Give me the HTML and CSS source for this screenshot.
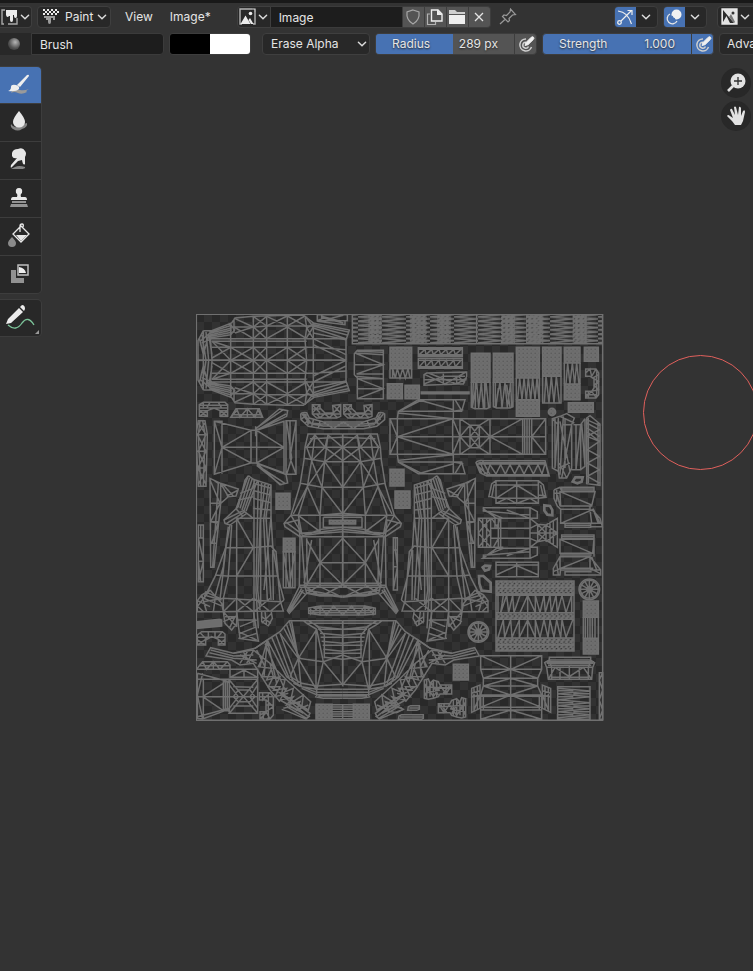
FILE: index.html
```
<!DOCTYPE html>
<html lang="en">
<head>
<meta charset="utf-8">
<title>Image Editor</title>
<link rel="stylesheet" href="styles.css">
</head>
<body>
<svg class="defs" aria-hidden="true">
  <symbol id="chevron" viewBox="0 0 10 10"><path d="M2 3.5 5 6.5 8 3.5" fill="none" stroke="#dcdcdc" stroke-width="1.2" stroke-linecap="round"/></symbol>
  <symbol id="picture" viewBox="0 0 18 18"><path d="M13 1H1V16H3M16 4V16H14" fill="none" stroke="#b4b4b4" stroke-width="1.4"/><path d="M13 1H16V4" fill="none" stroke="#e0e0e0" stroke-width="1.2"/><path d="M1.500 16 6.500 7.500 11.500 16ZM9.500 12 11 10 14.500 16H12Z" fill="#ececec"/><circle cx="11.500" cy="5.500" r="1.800" fill="#ececec"/></symbol>
  <symbol id="pressure" viewBox="0 0 18 18"><path d="M9 4A6 6 0 1 0 14.500 12M9 7.200A3 3 0 1 0 11.500 11.500" fill="none" stroke="#cfcfcf" stroke-width="1.500"/><path d="M8 10.500 9 7.500 14.300 2.200Q15.500 1.200 16.500 2.200T16.300 4.500L11 9.700Z" fill="#f0f0f0" stroke="#f0f0f0"/></symbol>
</svg>

<header class="header">
  <div class="row">
    <button class="box editor" aria-label="Editor type">
      <svg width="18" height="18" viewBox="0 0 18 18"><path d="M4 2H1V16H3M16 10V16H7" fill="none" stroke="#a8a8a8" stroke-width="1.400"/><path d="M5 2H16V8Q16 10 14.500 10T13 8V7H12V12Q12 14 10.500 14T9 12V8H8Q7.500 9 6.500 9T5 7Z" fill="#ececec"/></svg>
      <svg class="chev"><use href="#chevron"/></svg>
    </button>
    <div class="box mode">
      <svg width="18" height="18" viewBox="0 0 18 18"><path d="M1 1H3V3H1ZM5 1H7V3H5ZM9 1H11V3H9ZM13 1H15V3H13ZM3 3H5V5H3ZM7 3H9V5H7ZM11 3H13V5H11ZM15 3H17V5H15ZM1 5H3V7H1ZM5 5H7V7H5ZM9 5H11V7H9ZM13 5H15V7H13Z" fill="#ececec"/><path d="M2 8H13V12H11V10H9V14Q9 16 7.500 16T6 14V12H4V10H2Z" fill="#9b9b9b"/></svg>
      <select aria-label="Mode"><option>Paint</option><option>View</option><option>Mask</option></select>
      <svg class="chev"><use href="#chevron"/></svg>
    </div>
    <nav class="menus"><button>View</button><button>Image*</button></nav>
    <div class="datablock">
      <button class="box pick" aria-label="Browse image"><svg width="18" height="18"><use href="#picture"/></svg><svg class="chev"><use href="#chevron"/></svg></button>
      <input class="name" value="Image" aria-label="Image name">
      <button class="tile" aria-label="Fake user"><svg width="16" height="18" viewBox="0 0 16 18"><path d="M8 2 14 4Q15 12 8 16Q1 12 2 4Z" fill="none" stroke="#a6a6a6" stroke-width="1.200"/></svg></button>
      <button class="tile" aria-label="New image"><svg width="18" height="18" viewBox="0 0 18 18"><path d="M4 6H1.500V16.500H9.500V14" fill="none" stroke="#b2b2b2" stroke-width="1.200"/><path d="M5.500 2H12L16 6V13H5.500Z" fill="none" stroke="#eee" stroke-width="1.400"/><path d="M11 1.500 16.500 7H11Z" fill="#eee"/></svg></button>
      <button class="tile" aria-label="Open image"><svg width="18" height="18" viewBox="0 0 18 18"><path d="M1 2H7L9 4H17V6H1Z" fill="#cfcfcf"/><path d="M1 7H17V16H1Z" fill="#eee"/></svg></button>
      <button class="tile last" aria-label="Unlink"><svg width="18" height="18" viewBox="0 0 18 18"><path d="M5 5 13 13M13 5 5 13" stroke="#e4e4e4" stroke-width="1.300"/></svg></button>
    </div>
    <button class="pin" aria-label="Pin"><svg width="18" height="18" viewBox="0 0 18 18"><path d="M1 16 6.500 11M3.500 8.500 9 14 10.500 12.500 10 10.500 13.500 7 16.500 6.500 11.500 1 11 4 7.500 7.500 5 7Z" fill="none" stroke="#989898" stroke-width="1.200"/></svg></button>
    <div class="toggle gizmo">
      <button class="on" aria-label="Gizmos"><svg width="18" height="18" viewBox="0 0 18 18"><path d="M2 3Q12 4 15.500 16M5 13 15 3M11.500 2.500H16V7" fill="none" stroke="#eee" stroke-width="1.200"/><circle cx="3.500" cy="14.500" r="1.800" fill="none" stroke="#eee" stroke-width="1.300"/></svg></button>
      <button aria-label="Gizmo options"><svg class="chev"><use href="#chevron"/></svg></button>
    </div>
    <div class="toggle">
      <button class="on" aria-label="Overlays"><svg width="18" height="18" viewBox="0 0 18 18"><circle cx="11.500" cy="6.500" r="5" fill="#f1f1f1"/><path d="M5 6A5.200 5.200 0 1 0 12 13" fill="none" stroke="#e6e6e6" stroke-width="1.300"/><path d="M7 8A4 4 0 0 0 10 11" fill="none" stroke="#4772b3" stroke-width="1.300"/></svg></button>
      <button aria-label="Overlay options"><svg class="chev"><use href="#chevron"/></svg></button>
    </div>
    <button class="box channels" aria-label="Display channels"><svg width="18" height="18" viewBox="0 0 18 18"><path d="M1 1H16V16H1Z" fill="#e2e2e2" stroke="#e6e6e6" stroke-width="1.300"/><path d="M2 2 13 15H9L5.500 8 2 14Z" fill="#2b2b2b"/><path d="M8 9 10 6 14 14 13 15Z" fill="#777"/><circle cx="12" cy="5" r="1.500" fill="#333"/></svg><svg class="chev"><use href="#chevron"/></svg></button>
  </div>
  <div class="row second">
    <button class="brushpick" aria-label="Browse brush"><i></i></button>
    <input class="name brush" value="Brush" aria-label="Brush name">
    <div class="colors"><input type="color" value="#000000" aria-label="Primary color"><input type="color" value="#ffffff" aria-label="Secondary color"></div>
    <div class="box blend"><select aria-label="Blend mode"><option>Erase Alpha</option><option>Mix</option></select><svg class="chev"><use href="#chevron"/></svg></div>
    <div class="field">
      <label class="slider radius"><input type="range" min="0" max="512" value="289"><span>Radius</span><output>289 px</output></label>
      <button aria-label="Radius pressure"><svg width="18" height="18"><use href="#pressure"/></svg></button>
    </div>
    <div class="field active">
      <label class="slider strength"><input type="range" min="0" max="1" step="0.001" value="1"><span>Strength</span><output>1.000</output></label>
      <button aria-label="Strength pressure"><svg width="18" height="18"><use href="#pressure"/></svg></button>
    </div>
    <button class="box advanced">Advanced</button>
  </div>
</header>

<main class="canvas">
  <aside class="tools">
    <div class="group">
      <button class="on" aria-label="Draw"><svg viewBox="0 0 24 24"><path d="M5 18Q9 16 13 17T22 16Q18 18 20 19Q15 22 11 20T4 20Z" fill="#9a9a9a"/><path d="M10 12 20 2Q22 1 22 3L13 14ZM9 12Q13 13 12 16Q9 19 1 18Q4 17 4 14T9 12Z" fill="#eee"/></svg></button>
      <button aria-label="Soften"><svg viewBox="0 0 24 24"><path d="M4 15Q8 21 13 16L20 14Q21 18 15 20Q11 23 6 20Q3 18 4 15Z" fill="#858585"/><path d="M12 2Q18 9 18 13A6 5.500 0 0 1 6 13Q6 9 12 2Z" fill="#e8e8e8"/></svg></button>
      <button aria-label="Smear"><svg viewBox="0 0 24 24"><path d="M8 20Q12 18 18 20Q19 22 13 22H4Z" fill="#858585"/><path d="M5 6Q6 2 11 2Q16 0 18 4Q20 6 18 10V17Q16 19 15 13L11 14 5 20Q3 22 4 18L10 11Q6 12 5 9Z" fill="#e8e8e8"/></svg></button>
      <button aria-label="Clone"><svg viewBox="0 0 24 24"><path d="M9 8Q8 3 12 3T15 8Q13 9 14 12H18Q20 12 20 15H4Q4 12 6 12H10Q11 9 9 8Z" fill="#e8e8e8"/><path d="M5 16H19V18H5ZM4 19H20L21 22H3Z" fill="#949494"/></svg></button>
      <button aria-label="Fill"><svg viewBox="0 0 24 24"><path d="M5 14Q9 18 9 20A4 4 0 0 1 1 20Q1 18 5 14Z" fill="#8b8b8b"/><path d="M14 3 22 11 14 19 6 11ZM13 3V9M13 3Q13 1 15 1T16 4" fill="none" stroke="#e8e8e8" stroke-width="1.300"/><path d="M9 12H20L14 18Z" fill="#e8e8e8"/></svg></button>
      <button aria-label="Mask"><svg viewBox="0 0 24 24"><path d="M4 9H9V17H17V22H4Z" fill="#929292"/><path d="M11 4H21V14H11Z" fill="none" stroke="#bebebe" stroke-width="1.500"/><path d="M12 6Q18 7 19 12H12Z" fill="#eee"/></svg></button>
    </div>
    <div class="group">
      <button class="annotate" aria-label="Annotate"><svg viewBox="0 0 30 30"><path d="M3 22Q11 29 17 20Q23 12 29 22" fill="none" stroke="#7cc49a" stroke-width="1.300"/><path d="M1 21 3 16 14 5 18 9 6 20ZM15 4 17 2Q20 2 20 6L19 8Z" fill="#ececec"/></svg></button>
    </div>
  </aside>

  <svg class="uv" viewBox="18 18 1224 1224" role="img" aria-label="UV layout">
    <defs>
      <pattern id="checker" width="48" height="48" patternUnits="userSpaceOnUse" x="18" y="18"><path d="M0 0H48V48H0Z" fill="#323232"/><path d="M0 0H24V24H0ZM24 24H48V48H24Z" fill="#292929"/></pattern>
      <pattern id="dense" width="12" height="12" patternUnits="userSpaceOnUse"><path d="M0 0H12V12H0Z" fill="#6e6e6e"/><path d="M2 2H5V5H2ZM8 8H10V10H8Z" fill="#4b4b4b"/></pattern>
      <pattern id="cross" width="14" height="14" patternUnits="userSpaceOnUse"><path d="M0 0H14V14H0ZM0 14 14 0"/></pattern>
      <pattern id="flat" width="72" height="13" patternUnits="userSpaceOnUse"><path d="M0 1 72 7 0 13"/></pattern>
      <g id="wheel"><circle r="31"/><circle r="27"/><circle r="8"/><path d="M-31 0H31M0-31V31M-27-15 27 15M-27 15 27-15M-15-27 15 27M-15 27 15-27"/></g>
      <g id="cabin">
        <path d="M40 68H65L125 45 135 30 190 25 292 22H340L372 46 478 66 468 96V157M40 68 24 98V157M40 68V157M48 72 56 157M60 70 66 157M36 80 48 157M28 90 40 140 56 80 66 140M122 45V157M132 32V75M190 25V157M230 25V157M292 22V157M345 24 350 60 345 95 350 157M370 46V157"/>
        <path d="M22 157H468M60 92H468M65 100H350M65 118H370M122 57H190L230 54H370M66 100 122 118M60 72 125 52M62 75 125 60M62 80 125 66M62 85 130 72M60 90 122 80M30 100 60 75M35 105 66 92M122 50 134 66 122 80"/>
        <path d="M66 100 122 157M66 150 122 118M122 157 190 118M122 118 190 157M190 157 230 118M190 118 230 157 292 118M292 118 350 157M350 118 292 157M370 110 468 157M370 118 468 125M370 92 468 140M370 60 468 92M370 75 468 95M372 50 475 72M370 54 474 82"/>
        <path d="M135 32 190 57 135 75M190 25 230 54 292 24M230 25 190 57 230 92M230 25 292 54 345 24M292 24 350 56M230 57 190 92M292 57 230 92M292 57 350 92M132 57 190 92M345 24 370 57 348 92M372 46 350 60 370 92"/>
      </g>
      <g id="lamp"><path d="M367 290H390V300L405 315H430L428 292 452 290V325L440 330H380L367 318ZM367 318H452M367 290 390 315M390 290 367 315M452 290 430 315M430 292 452 315M367 303H393M380 318 390 329 404 318 418 329 430 318 442 329"/></g>
      <g id="hood">
        <path d="M458-18H354L345 22 342 60 330 135 303 226 282 250 285 260 330 290H458M375-15 350 22H458M360-4 458-8M342 55 405 65H458M332 130 395 142H458M303 226H458M330 280 395 275 458 268M330 290 395 268 458 262M285 250 325 240 330 290M290 248 338 284M390 226 458 220M340 286 395 280 458 275"/>
        <path d="M375-15 365 62 352 140 325 226 335 280M414-15 404 65 396 142 390 226V280M458-18V436M350 22 375-15 405 22 414-15 458 22M365 62 350 22M365 62 405 22 458 62M405 65 458 22M352 140 404 65 458 142M396 142 365 62M396 142 458 222M325 226 352 140 390 226M325 226 390 275M303 226 335 280M310 222 352 140M400 232H458M400 232V262H458"/>
        <path d="M330 290 328 440M335 290 345 440M350 295 352 435M365 300 342 430M390 295V435M350 300 390 368 458 295M390 368 458 435M390 368 350 435M390 368H458M330 436H458M345 430H458"/>
        <path d="M330 436 292 512 298 520 350 460 390 468H458M335 445 295 514M340 450 298 516M350 450 458 470M330 442H458M350 458 458 472M340 435 390 468M390 435 350 460M458 435 395 468M390 440 458 472M345 440 350 460M330 452 345 462"/>
      </g>
      <g id="fender">
        <path d="M60 115 92 130 145 147 138 168 115 170 92 190 72 382H62ZM92 130V190H62M92 130 115 170M95 130 130 168M60 245H88M60 120 90 190 62 245 85 250 65 310H80M70 120 85 130 68 380M145 150 110 168M66 310 84 250"/>
        <path d="M175 107 190 118 243 135V230L248 315 262 405 282 480M175 107 165 120 145 200 102 240 105 250 120 255 108 320 75 410 42 475M180 110 150 205M187 115 156 210M195 120 162 212M202 122 168 214M175 107 138 206M192 118V560M205 122 198 450 205 565M215 125 203 450 210 510M225 130 212 235V490M235 135 221 240 232 480M243 135 228 230 243 480M243 230 222 450M243 318 258 335 270 480M248 330 250 480"/>
        <path d="M140 235H243M105 323H190L245 318M75 405 110 408H265M190 323 140 408M140 235 190 323M140 235V560M125 255 115 410 100 475M115 260 100 380 75 470M108 320 90 480M102 240 160 212 190 235M110 250 165 215M120 255 170 220M190 130 243 145M190 152 243 165M190 175 243 188M190 205 243 210M150 160 190 145M145 180 190 170M138 206 160 230"/>
        <path d="M60 450 35 465 22 482V515L100 515 95 490 60 450M40 485 100 475 270 485M100 515 280 513 270 480M22 482 60 500M42 465 95 480M35 465 50 515M30 470 100 500M45 455 90 475M60 450 22 500M100 475V515L140 560M140 475 100 515M140 515 190 475M190 515 140 475M192 475 240 515M192 515 240 475M240 515 282 480M100 515 105 550 125 570 140 550M105 530H140M100 545 135 530 118 565M140 540H195M145 595 205 603 190 515M140 515 150 595M150 560 200 540M145 575 200 600M150 580 200 560M155 595 200 580M215 515V545L235 557 247 535 243 510M215 530 243 550M215 550 245 520M225 515 230 555M25 500 40 515M75 480 70 515"/>
      </g>
      <g id="front">
        <path d="M458 122H298L270 155 232 180 195 205 130 220 62 203 48 228 125 240 150 255 190 250 240 330 270 365M340 122 350 130H458M350 130 380 148 400 245 380 330V348M385 145 403 165V235M370 130 395 150M355 122 385 140M298 122 325 235 270 160M305 125 325 235 380 148M325 235 380 330M325 235 400 245 458 225M400 245 458 315 458 122M400 245 380 330M325 235 333 318M325 235 300 290M378 150V330"/>
        <path d="M385 148H458M390 160 458 166M392 172H458M395 184 458 190M398 196H458M400 208 458 214M402 220H458M403 232 458 238M380 140 458 148M300 290 335 310 380 318 458 313M305 300 335 320 380 328H458M310 310 380 337H458M335 325 380 344H458M375 350 400 355H458M385 348 458 348"/>
        <path d="M232 180 290 290 330 320M245 172 300 300M258 165 310 305M270 160 325 310M282 145 330 235M290 135 325 230M232 180 222 290M232 180 260 310M225 190 285 330M195 205 232 180 210 260M130 220 190 210 240 250 290 300 362 365 355 390 240 320M62 210 130 228 190 225M58 218 130 235 200 240M150 225 200 250M160 215 180 250M175 210 150 250M190 212 170 250M200 210 225 260 215 290 250 290 235 320 270 320 255 350 295 340M220 230 205 260 245 265 230 300 270 290 250 330 290 325 270 360 310 350 290 375 330 365 320 390 355 375M240 250 250 290 285 300 275 340 310 325 300 370 340 345 335 385M270 340 355 410 360 400 290 350M270 360 340 400M290 380 350 415 360 408M280 385 300 380 330 395M275 388 295 395 350 418"/>
      </g>
      <g id="pillar"><path d="M25 310 85 275H225L215 310H190V332L25 315ZM85 275 190 305M35 306 95 276M190 275V310L220 305M195 275 215 308M25 310H210M25 310 22 332"/></g>
      <g id="blob"><path d="M103 300 115 297 120 310 130 300 145 305 150 315H185V342H150L145 350 130 355 115 358 103 355ZM103 320 185 325M103 340 150 330M110 300V355M120 310V350M130 300V355M140 305V350M103 310 130 350 150 320M103 350 125 310 145 345M150 315 168 342 185 315M168 315V342M178 318 160 340"/></g>
    </defs>
    <path d="M18 18H1240V1239H18Z" fill="url(#checker)"/>
    <g class="wire">
      <path d="M19 19H1238V1237H19Z"/>
      <!-- cabin, top strip -->
      <use href="#cabin"/><use href="#cabin" transform="translate(0 314) scale(1 -1)"/>
      <path d="M382 20H472V38H382ZM395 22V38L460 22M395 25 445 38M382 40 465 50V38M382 38 400 30 460 45"/>
      <g stroke="none"><path d="M487 20H1238V107H487Z" fill="url(#flat)"/>
      <path d="M535 20H575V107H535ZM660 20H710V107H660ZM742 20H782V107H742ZM933 20H975V107H933ZM1008 20H1060V107H1008ZM1148 20H1188V107H1148Z" fill="url(#cross)"/></g>
      <path d="M487 20V107H1238M860 20V107M1188 20V107"/>
      <path d="M502 127H580V272H502V210L493 200V137ZM495 135 580 140M495 135 580 170 500 198H580M495 205 580 212M502 212 580 242 502 272M502 212H580M502 242H580M495 170H580M502 130 580 133"/>
      <path d="M28 325V290L40 283H105L113 290V325H90V308L72 300 52 308V325ZM28 300H113M28 325 52 308M113 325 90 308M28 308 52 325M90 325 113 308M30 292H113M40 283V300M60 283 50 300M85 283 95 300M28 308H52M90 308H113"/>
      <path d="M122 328 138 302H208L218 328ZM140 302 150 328 172 302 195 328 205 302M172 302V328M128 320H212M125 325 140 308M215 325 205 308"/>
      <path d="M73 340 183 367V465L73 499ZM73 340H96V497M183 367H200V465H183M200 367 282 340V495L200 465M73 340 96 418 73 499M96 418H282M96 418 183 367M96 418 183 465M282 418 200 367M282 418 200 465M288 338H318V499H288ZM300 338V450M290 340 305 450 290 499M318 340 300 450 318 499M200 360 268 303 293 308 290 325 200 367ZM200 360 280 305M203 365 288 318M200 466 270 530 293 525 288 500ZM200 472 275 532M205 474 285 526M197 355V385"/>
      <path d="M25 338H45L52 380 48 535H25L18 380ZM30 338 25 380 32 535M38 338 45 380 40 535M18 380H52M20 430H50M22 480H49M25 345 48 380 25 430 48 480 25 530M45 345 22 380 48 430 24 480 48 530"/>
      <path d="M25 651H40V821H25ZM25 690H40M25 760H40M32 651V690M25 690 40 760 25 821M25 760 32 821"/>
      <use href="#lamp"/><use href="#lamp" transform="translate(94 0)"/>
      <path d="M332 318Q335 312 350 314L358 330 400 342H520L558 330 566 314Q580 312 584 318V335L560 355 520 362H400L355 355 333 335ZM336 318 358 345 400 348H520L558 345 580 318M340 316 365 348 400 354H520L552 350 572 316M333 335 350 320M345 347 358 330M365 356 370 336M385 360 390 340M532 340 540 358M554 332 565 348M345 318 355 350M572 335 560 320M400 342 430 362 460 342 490 362 520 342"/>
      <!-- hood, roof, fenders, front -->
      <g transform="translate(0 396)">
        <use href="#hood"/><use href="#hood" transform="translate(916) scale(-1 1)"/>
        <use href="#fender"/><use href="#fender" transform="translate(916) scale(-1 1)"/>
        <path class="fill" d="M258 160H300V208H258ZM600 88H642V138H600ZM615 153H660V205H615ZM280 295H315V335H280ZM418 241H497V252H418Z"/>
        <path d="M280 335H315V443H280ZM288 335V443M297 335 302 443M308 335V443M280 335 297 443 315 335M610 293H622V450H610ZM616 293V330L622 380 610 450M610 330H622M610 380H622"/>
      </g>
      <g transform="translate(0 816)">
        <use href="#front"/><use href="#front" transform="translate(916) scale(-1 1)"/>
        <path d="M356 84 390 78H525L556 84V102L525 105H390L356 100ZM356 92H556M362 82V102L390 78 410 105 430 78 458 105 485 78 505 105 525 78 550 102V82M390 78V105M525 78V105M370 85H545M370 98H545"/>
        <path class="fill" d="M378 373H426V417H378ZM490 373H538V417H490Z"/><path d="M426 374H490M426 381H490M426 388H490M426 395H490M426 402H490M426 409H490M426 416H490M458 374V416"/>
        <path class="solid" d="M20 125 88 118 95 120V138L20 145Z"/>
        <path d="M22 195V165L35 155H97L105 162V195H85V178L65 170 47 180V195ZM22 172H105M22 180 47 195M22 195 47 178M85 195 105 178M85 178 105 195M30 158 50 178M97 155 80 175M55 155V172M75 155V172M22 265 38 245H112L120 255V268H22ZM30 257H118M38 245 50 268 70 245 90 268 112 245M70 245V268M120 268H203V292H120ZM162 268V292M120 292 162 270 203 292"/>
        <path d="M22 280 118 305M22 298H203M22 410 118 385M38 280 22 345 38 417M22 280V415M40 300V415M38 350 100 310M38 350 100 392M22 350H203M100 305H112V392H100ZM106 305V392M203 298 118 400H203V292M118 300 203 400M118 298V400M130 350 145 330H180L195 350 180 365H145ZM118 315 145 350 118 385M203 315 180 350 203 385M112 310 120 298M112 385 120 400M130 320 190 322M130 378H190M20 415 38 417 105 392"/>
        <path d="M208 338H240L250 350V405L240 417H210V395H228V360H208ZM218 338V360L240 338M208 350H250M228 360 250 380 228 395M235 340V415M210 405 228 395 240 417M220 395V417M210 417 230 397M228 375H250"/>
      </g>
      <!-- upper right islands -->
      <g transform="translate(600 0)">
        <path class="fill" d="M0 118H65V182H0ZM-8 227H37V272H-8ZM45 232H88V272H45ZM244 136H300V223H244ZM310 136H369V223H310ZM379 118H448V210H379ZM379 275H448V325H379ZM458 118H513V205H458ZM523 118H570V165H523ZM523 228H570V275H523ZM583 118H625V160H583ZM535 284H610V313H535Z"/>
        <circle class="fill" cx="486" cy="312" r="11"/>
        <path d="M0 182V210H65V182M8 210V182L16 210 22 182 30 210 38 182 46 210 54 182 60 210M85 119H217V145H85ZM85 151H217V181H85ZM85 124H217M85 140H217M85 157H217M85 176H217M88 140 105 124 108 140 125 124 130 140 147 124 152 140 169 124 174 140 191 124 196 140 213 124M88 176 105 157 108 176 125 157 130 176 147 157 152 176 169 157 174 176 191 157 196 176 213 157"/>
        <path d="M102 200 110 195 230 192V205L220 228H205L102 232ZM102 215H230M105 200 165 228 205 205 225 225M160 195V230M115 195 200 228M205 205 228 192M102 228 160 205H225M200 210V228L230 210"/><path class="solid" d="M94 252H237V257H94Z"/>
        <path d="M244 223V298L255 302H290L300 298V223M250 223 247 298 260 223 266 300 274 223 280 300 288 223 296 298M256 223V300M284 223V300M310 223V296L320 300H360L369 296V223M316 223V298L330 223 336 298 345 223 352 298 362 223 365 298M325 240 318 298M350 230 360 298M379 210V275M448 210V275M383 275 389 210 396 275 402 210 409 275 415 210 422 275 428 210 435 275 441 210 447 275M458 205V285H513V205M463 285 468 205 477 285 484 205 492 285 499 205 508 285M523 165V228M570 165V228M528 228 533 165 540 228 547 165 554 228 560 165 567 228"/>
        <path d="M587 183H618L626 195V260L618 270H587V250H605L612 240V212L600 205H587ZM587 195 600 183 605 205 618 183M626 200 608 210 626 220 612 232 626 245 605 250 618 268M587 268 605 250M620 190V265M595 250V270M587 260H620"/>
        <use href="#pillar"/><use href="#pillar" transform="translate(0 772) scale(1 -1)"/>
        <path d="M0 332H467V439H0ZM22 332V439M188 332V439M210 332V439M300 332V439M398 332V439M404 332V439M411 332V439M418 332V439M425 332V439M22 386H467M188 332 22 386 188 439M0 332 22 386 0 439M210 332 240 352H268L300 332M210 439 240 419H268L300 439M240 352V419M268 352V419M188 332 210 386 240 352M240 419 210 386 188 439M268 352 300 386 268 419M398 332 300 386 398 439M467 332 425 386 467 439M240 352 268 386 240 419M268 352 240 386 268 419"/>
        <path d="M487 332 510 325 530 317 553 330 545 350V480L530 510H508L505 490 487 480ZM505 330V490M520 325 510 500M545 350 515 510M550 350H572V485H545M585 332V475L572 485M572 350 585 332M558 350V485L572 350M575 345 585 475M487 332 505 350M510 325 553 345M495 332V480L505 330M525 330V480M510 340 540 490M505 480 540 465M508 465 530 510M520 350H545"/>
        <path d="M590 330 600 323 630 348V532L590 527ZM595 330V525M624 345V530M590 345 628 365 592 385 628 400 592 425 628 445 592 465 628 485 592 505 628 525M590 335 628 352M592 360 628 385M592 372 628 400"/>
      </g>
      <!-- middle right islands -->
      <g transform="translate(600 396)">
        <path d="M258 68Q262 60 280 62H465L478 108H290L270 98ZM262 72H468M265 68H468M264 78 292 104H475M270 66 285 102M278 64 300 104M260 70 275 98M290 104 300 74 318 102 332 74 346 102 360 74 374 102 388 74 402 102 416 74 430 102 444 74 456 102 466 68 475 104"/>
        <path d="M318 122H445V190H318ZM296 172 305 132 318 122M305 172 312 135H318M296 168 318 175M318 135H445M318 175H445M380 122V190M318 175 380 135 445 175M318 190 350 175 380 190 420 175 445 190M445 122 460 135 468 172 445 175M452 135 460 170M445 165 468 168"/>
        <path d="M278 203H420V355H278L320 325H420M278 205 320 235H420M278 210 340 235M278 350 340 325M300 265H420M300 295H420M265 235H302V322H265ZM278 235V322M290 235V322M265 235 302 279 265 322M302 235 265 279 302 322M302 235H340M302 322H340M305 235 325 265M325 235V322M315 235V265M330 235 320 265M310 322 325 295M332 235V322M278 213 420 225M278 346 420 335M420 203 442 215V235H420M420 235 350 210M420 325 350 347M420 355 442 345V322H420M420 235 443 253 468 255 502 235V322L468 300 443 305 420 322M443 253V305M468 255V305M420 265 443 253 468 279 443 305 420 295M468 255 502 279 468 305M480 245V312M490 240V318M420 279H502M468 255 443 279 468 300"/>
        <path d="M318 367H445V410H318ZM380 367V410M318 375H445M318 405 380 377 445 405"/>
        <path class="ring" d="M463 196 480 198 487 210V226L472 224 463 212ZM548 125 556 112 578 112 575 125 562 130ZM278 382 285 377 300 378 297 388 285 392ZM267 408 280 408 302 428V455L275 452 268 430Z"/>
        <path d="M515 142H612V153H515ZM492 150 510 142 515 153M510 155H615L605 198H512ZM510 155 605 195M502 165 510 198M492 150V175L502 198 512 208H600V198M512 208V250H630L610 208 512 250M600 208 605 250M525 250V262H602V250M605 208 630 235 637 260H602M610 210 625 250M492 160H510M525 256H600M500 150V185M515 147H612"/>
        <path d="M515 285H612V296H515ZM510 298H612L608 340H510ZM510 298 608 340M510 345H605M600 350H510L490 385V405H510L512 385 600 350 632 390V405H525V395H605M600 350V385L630 400M510 350V385M500 370 505 405M490 395 512 385H610M512 390H630M605 350 620 390M515 290H612M612 298V350"/>
      </g>
      <!-- lower right islands -->
      <g transform="translate(600 816)">
        <use href="#wheel" transform="translate(265 156)"/><use href="#wheel" transform="translate(598 28)"/>
        <path stroke="none" fill="url(#cross)" d="M318 3H552V42H318ZM318 100H552V118H318ZM318 175H552V213H318Z"/>
        <path d="M318 3H552V213H318ZM318 22H552M318 42H552M318 46H552M318 98H552M318 118H552M318 174H552M318 194H552M413 46V172M324 46V98M340 46 332 98 350 46 356 98 368 46 372 98 390 46M390 98 413 46 436 98 436 46 450 98 462 46 466 98 480 46 484 98 498 46 502 98 516 46 528 98 545 46V98M324 172 340 120 344 172 362 120 366 172 388 120V172L413 120 436 172V120L450 172 462 120 474 172 480 120 492 172 500 120 512 172 516 120 528 172 548 120"/>
        <path class="fill" d="M580 63H625V112H580ZM580 175H625V222H580ZM190 253H235V300H190Z"/><path d="M580 112V175M625 112V175M586 112V175M593 112V175M600 112V175M607 112V175M615 112V175"/>
        <use href="#blob"/><use href="#blob" transform="translate(330 56) scale(-1 1)"/>
        <path d="M272 227H455V250V268L443 295V318L455 345V418H272V345L280 318V295L272 268ZM362 227V418M272 268H455M280 295H443M280 318H443M272 345H455M272 349H455M272 382H455M272 390H455M272 227 362 268 455 227M280 295 362 268 443 295M362 295 280 318M362 295 443 318M280 318 362 345 443 318M272 382 362 345 455 382M272 418 362 390 455 418M280 349V390M448 349V390"/>
        <path d="M245 325 270 315V385L245 397ZM245 340 270 332M252 325V392M262 320V388M245 350 270 345 252 390M482 325 457 315V385L482 397ZM482 340 457 332M475 325V392M465 320V388M482 350 457 345 475 390"/>
        <path d="M478 232H602V240L614 248 608 262 605 298H475L470 262 464 248 478 240ZM466 245H612M470 250H610M474 256H604M472 262H606M478 240H602M485 262V298M595 262V298M538 256V298M475 298 495 262 538 290 580 262 605 298M485 292H598M485 262 478 240M595 262 602 240M510 262V298M568 262V298"/>
        <path d="M503 320H600V418H503ZM503 325 600 333 503 341 600 350 503 359 600 368 503 377 600 386 503 395 600 404 503 413M503 332H550M503 350H550M550 341H600M503 368H550M550 378H600M503 386H550M550 395H600M503 404H550M520 418 600 410"/>
        <path d="M628 278H638V418H628ZM628 300 638 278M628 300 638 330 628 360 638 390 628 418M55 380 62 377H88V388L80 391H53ZM27 408 35 404H100V415L95 418H25ZM30 411H100M58 384H86M-10 380 15 375 40 388 20 398-5 394Z"/>
      </g>
    </g>
  </svg>
  <div class="cursor"></div>

  <div class="gizmos">
    <button aria-label="Zoom"><svg viewBox="0 0 30 30"><path d="M7 23 12 18" stroke="#e2e2e2" stroke-width="2.600"/><circle cx="17" cy="13" r="7.500" fill="#e2e2e2"/><path d="M17 9V17M13 13H21" stroke="#303030" stroke-width="1.300"/></svg></button>
    <button aria-label="Pan"><svg viewBox="0 0 30 30"><path d="M14 24 11 20 6 15Q7 13 9 15L12 17 9 9Q10 7 11 8L14 14 13 6Q14 5 15 6L17 14 18 6Q19 5 20 7L20 15 22 10Q24 8 24 11L22 20 20 24Z" fill="#e2e2e2"/></svg></button>
  </div>
</main>
</body>
</html>
```
FILE: styles.css
```
* { box-sizing: border-box; }
html, body { height: 100%; }
body {
  margin: 0;
  display: flex;
  flex-direction: column;
  overflow: hidden;
  background: #333333;
  color: #e5e5e5;
  font: 12px/20px Inter, "Liberation Sans", sans-serif;
}
button, input, select {
  margin: 0;
  padding: 0;
  border: 0;
  font: inherit;
  color: inherit;
  background: none;
  appearance: none;
}
button { display: flex; align-items: center; justify-content: center; flex: none; }
svg { display: block; flex: none; }
.defs { position: absolute; width: 0; height: 0; }
.chev { width: 12px; height: 12px; }

.header {
  flex: none;
  border-top: 3px solid #191919;
  padding-top: 3px;
  background: #333333;
  overflow: hidden;
}
.row { display: flex; align-items: center; height: 22px; white-space: nowrap; }
.second { margin-top: 5px; }

.box {
  display: flex;
  align-items: center;
  flex: none;
  height: 22px;
  border: 1px solid #3f3f3f;
  border-radius: 4px;
  background: #282828;
}
.editor { width: 32px; border-left: 0; border-radius: 0 4px 4px 0; margin-right: 5px; }
.mode { width: 74px; padding: 0 2px 0 4px; }
.mode select { flex: 1; min-width: 0; padding-left: 5px; }
.menus { display: flex; gap: 17px; padding: 0 26px 0 14px; }
.datablock { display: flex; flex: none; }
.pick { width: 34px; border-radius: 4px 0 0 4px; }
.name {
  width: 132px;
  height: 22px;
  padding: 0 8px;
  border: 1px solid #3b3b3b;
  border-left-width: 0;
  background: #1d1d1d;
}
.tile {
  width: 22px;
  height: 22px;
  border: 1px solid #3d3d3d;
  border-left-width: 0;
  background: #545454;
}
.last { border-radius: 0 4px 4px 0; }
.pin { margin-left: 8px; }
.toggle {
  display: flex;
  flex: none;
  height: 22px;
  margin-right: 5px;
  border: 1px solid #3d3d3d;
  border-radius: 4px;
  background: #282828;
  overflow: hidden;
}
.toggle button { width: 21px; height: 20px; }
.gizmo { margin-left: 97px; }
.toggle .on { background: #4772b3; }
.channels { width: 44px; margin-left: 5px; justify-content: flex-start; padding-left: 3px; }

.brushpick { width: 31px; height: 22px; background: #282828; }
.brushpick i {
  width: 12px;
  height: 12px;
  margin-right: 4px;
  border-radius: 50%;
  background: radial-gradient(circle at 60% 35%, #b5b5b5, #555 55%, #282828);
}
.brush { width: 133px; border-left-width: 1px; border-radius: 0 4px 4px 0; }
.colors {
  display: flex;
  flex: none;
  width: 82px;
  height: 22px;
  margin: 0 11px 0 5px;
  border: 1px solid #3d3d3d;
  border-radius: 4px;
  overflow: hidden;
}
.colors input { width: 50%; height: 20px; }
.colors input::-webkit-color-swatch-wrapper { padding: 0; }
.colors input::-webkit-color-swatch { border: 0; border-radius: 0; }
.blend { width: 108px; margin-right: 5px; padding: 0 1px 0 8px; }
.blend select { flex: 1; }
.field {
  display: flex;
  flex: none;
  height: 22px;
  margin-right: 5px;
  border: 1px solid #3d3d3d;
  border-radius: 4px;
  background: #545454;
  overflow: hidden;
}
.field button { width: 22px; height: 20px; border-left: 1px solid #3d3d3d; }
.field.active { background: #4772b3; }
.slider {
  display: flex;
  justify-content: space-between;
  position: relative;
  height: 20px;
  text-shadow: 0 1px 2px #222;
}
.slider input { position: absolute; inset: 0; width: 100%; }
.slider input::-webkit-slider-thumb { appearance: none; width: 1px; }
.slider span, .slider output { position: relative; pointer-events: none; }
.radius { width: 138px; padding: 0 16px; background: linear-gradient(90deg, #4772b3 56%, #545454 56%); }
.strength { width: 148px; padding: 0 16px; }
.advanced { width: 84px; padding-left: 7px; justify-content: flex-start; }

.canvas { position: relative; flex: 1; overflow: hidden; }
.tools { display: flex; flex-direction: column; gap: 5px; width: 42px; padding-top: 11px; }
.group {
  display: flex;
  flex-direction: column;
  gap: 1px;
  border: 1px solid #3d3d3d;
  border-left: 0;
  border-radius: 0 5px 5px 0;
  background: #3d3d3d;
  overflow: hidden;
}
.group button { height: 37px; padding: 0 4px 3px 0; background: #282828; }
.group .on { height: 36px; padding-bottom: 0; background: #4772b3; }
.group svg { width: 24px; height: 24px; }
.group .annotate { height: 36px; padding: 0 2px 0 0; position: relative; }
.group .annotate svg { width: 30px; height: 30px; }
.annotate::after {
  content: "";
  position: absolute;
  right: 2px;
  bottom: 2px;
  border: 2px solid transparent;
  border-right-color: #999;
  border-bottom-color: #999;
}

.uv { position: absolute; left: 196px; top: 259px; width: 408px; height: 408px; }
.wire, .uv pattern path { stroke-width: 4.500; }
.wire { fill: none; stroke: #707070; }
#cross path, #flat path { fill: none; stroke: #707070; }
#dense path { stroke: none; }
.fill { fill: url(#dense); }
.solid { fill: #6e6e6e; }
.ring { stroke-width: 8; }
.cursor {
  position: absolute;
  left: 643px;
  top: 300px;
  width: 115px;
  height: 115px;
  border: 1px solid #e0605c;
  border-radius: 50%;
}
.gizmos {
  position: absolute;
  top: 13px;
  right: 2px;
  display: flex;
  flex-direction: column;
  gap: 3px;
}
.gizmos button { width: 30px; height: 30px; border-radius: 50%; background: #282828; }
.gizmos svg { width: 30px; height: 30px; }
```
